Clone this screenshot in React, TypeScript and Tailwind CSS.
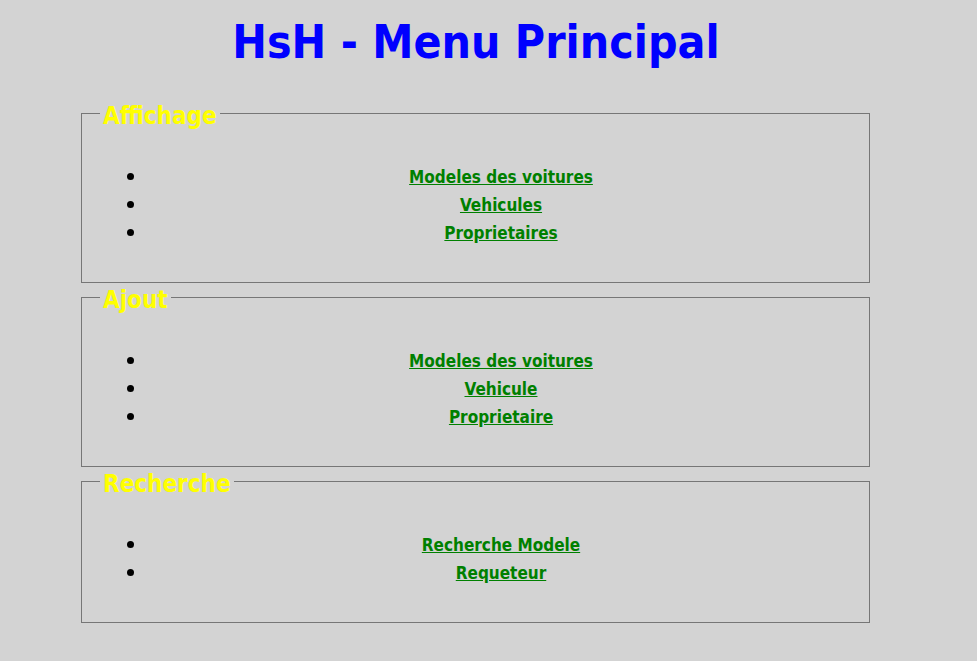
import React from 'react'

const sections = [
  { title: 'Affichage', links: ['Modeles des voitures', 'Vehicules', 'Proprietaires'] },
  { title: 'Ajout', links: ['Modeles des voitures', 'Vehicule', 'Proprietaire'] },
  { title: 'Recherche', links: ['Recherche Modele', 'Requeteur'] },
]

export default function App() {
  return (
    <div className="min-h-[661px] bg-[#d3d3d3] font-['DejaVu_Sans_Condensed',Tahoma,sans-serif] font-bold">
      <h1 className="w-[952px] pt-[14px] text-center text-[46px] leading-[56px] text-[#0000ff]">
        HsH - Menu Principal
      </h1>

      <div className="mt-[29px] ml-[81px] flex w-[789px] flex-col">
        {sections.map((section) => (
          <fieldset
            key={section.title}
            className="border border-[#767676] px-[14px] pb-[35px]"
          >
            <legend className="ml-[4px] px-[3px] pt-[5px] text-[24px] leading-[24px] text-[#ffff00]">
              {section.title}
            </legend>
            <ul className="mt-[35px] list-disc pl-[51px] text-[17px] leading-[28px] marker:text-[22px] marker:leading-[18px]">
              {section.links.map((link) => (
                <li key={link} className="h-[28px] text-center">
                  <a href="#" className="text-[#008000] underline">
                    {link}
                  </a>
                </li>
              ))}
            </ul>
          </fieldset>
        ))}
      </div>
    </div>
  )
}
